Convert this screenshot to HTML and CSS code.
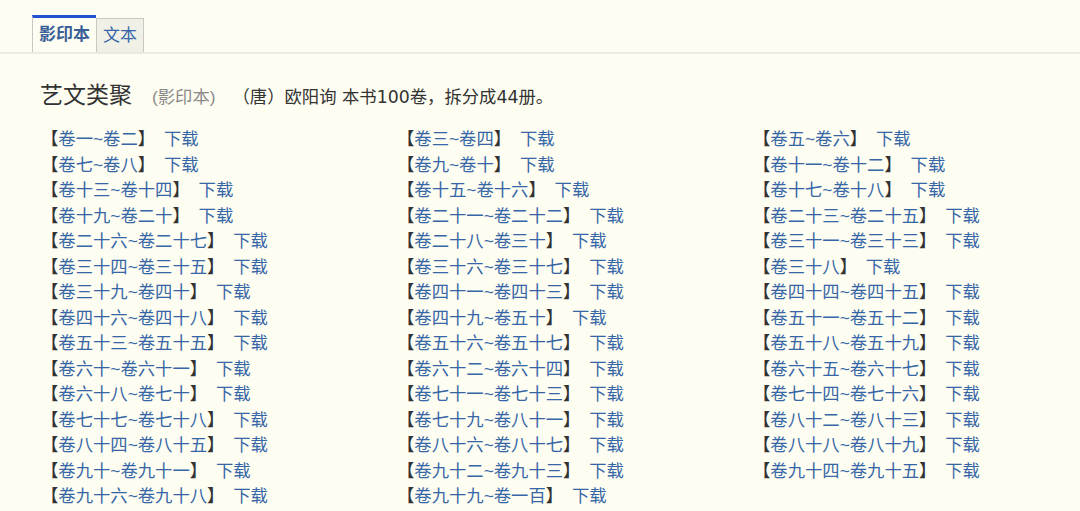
FILE: index.html
```html
<!DOCTYPE html>
<html lang="zh">
<head>
  <meta charset="UTF-8" />
  <title>艺文类聚</title>
  <link rel="stylesheet" href="styles.css">
</head>
<body>

  <!-- TABS -->
  <div class="tabs">
    <a class="tab active" href="#">影印本</a>
    <a class="tab" href="#">文本</a>
  </div>

  <div class="content">
    <h1 class="title">艺文类聚<span class="edition">(影印本)</span><span class="meta">（唐）欧阳询 本书100卷，拆分成44册。</span></h1>

    <ul class="volumes">
      <li>【<a href="#">卷一~卷二</a>】 <a href="#">下载</a></li>
      <li>【<a href="#">卷三~卷四</a>】 <a href="#">下载</a></li>
      <li>【<a href="#">卷五~卷六</a>】 <a href="#">下载</a></li>
      <li>【<a href="#">卷七~卷八</a>】 <a href="#">下载</a></li>
      <li>【<a href="#">卷九~卷十</a>】 <a href="#">下载</a></li>
      <li>【<a href="#">卷十一~卷十二</a>】 <a href="#">下载</a></li>
      <li>【<a href="#">卷十三~卷十四</a>】 <a href="#">下载</a></li>
      <li>【<a href="#">卷十五~卷十六</a>】 <a href="#">下载</a></li>
      <li>【<a href="#">卷十七~卷十八</a>】 <a href="#">下载</a></li>
      <li>【<a href="#">卷十九~卷二十</a>】 <a href="#">下载</a></li>
      <li>【<a href="#">卷二十一~卷二十二</a>】 <a href="#">下载</a></li>
      <li>【<a href="#">卷二十三~卷二十五</a>】 <a href="#">下载</a></li>
      <li>【<a href="#">卷二十六~卷二十七</a>】 <a href="#">下载</a></li>
      <li>【<a href="#">卷二十八~卷三十</a>】 <a href="#">下载</a></li>
      <li>【<a href="#">卷三十一~卷三十三</a>】 <a href="#">下载</a></li>
      <li>【<a href="#">卷三十四~卷三十五</a>】 <a href="#">下载</a></li>
      <li>【<a href="#">卷三十六~卷三十七</a>】 <a href="#">下载</a></li>
      <li>【<a href="#">卷三十八</a>】 <a href="#">下载</a></li>
      <li>【<a href="#">卷三十九~卷四十</a>】 <a href="#">下载</a></li>
      <li>【<a href="#">卷四十一~卷四十三</a>】 <a href="#">下载</a></li>
      <li>【<a href="#">卷四十四~卷四十五</a>】 <a href="#">下载</a></li>
      <li>【<a href="#">卷四十六~卷四十八</a>】 <a href="#">下载</a></li>
      <li>【<a href="#">卷四十九~卷五十</a>】 <a href="#">下载</a></li>
      <li>【<a href="#">卷五十一~卷五十二</a>】 <a href="#">下载</a></li>
      <li>【<a href="#">卷五十三~卷五十五</a>】 <a href="#">下载</a></li>
      <li>【<a href="#">卷五十六~卷五十七</a>】 <a href="#">下载</a></li>
      <li>【<a href="#">卷五十八~卷五十九</a>】 <a href="#">下载</a></li>
      <li>【<a href="#">卷六十~卷六十一</a>】 <a href="#">下载</a></li>
      <li>【<a href="#">卷六十二~卷六十四</a>】 <a href="#">下载</a></li>
      <li>【<a href="#">卷六十五~卷六十七</a>】 <a href="#">下载</a></li>
      <li>【<a href="#">卷六十八~卷七十</a>】 <a href="#">下载</a></li>
      <li>【<a href="#">卷七十一~卷七十三</a>】 <a href="#">下载</a></li>
      <li>【<a href="#">卷七十四~卷七十六</a>】 <a href="#">下载</a></li>
      <li>【<a href="#">卷七十七~卷七十八</a>】 <a href="#">下载</a></li>
      <li>【<a href="#">卷七十九~卷八十一</a>】 <a href="#">下载</a></li>
      <li>【<a href="#">卷八十二~卷八十三</a>】 <a href="#">下载</a></li>
      <li>【<a href="#">卷八十四~卷八十五</a>】 <a href="#">下载</a></li>
      <li>【<a href="#">卷八十六~卷八十七</a>】 <a href="#">下载</a></li>
      <li>【<a href="#">卷八十八~卷八十九</a>】 <a href="#">下载</a></li>
      <li>【<a href="#">卷九十~卷九十一</a>】 <a href="#">下载</a></li>
      <li>【<a href="#">卷九十二~卷九十三</a>】 <a href="#">下载</a></li>
      <li>【<a href="#">卷九十四~卷九十五</a>】 <a href="#">下载</a></li>
      <li>【<a href="#">卷九十六~卷九十八</a>】 <a href="#">下载</a></li>
      <li>【<a href="#">卷九十九~卷一百</a>】 <a href="#">下载</a></li>
    </ul>
  </div>

</body>
</html>
```

FILE: styles.css
```css
body {
  margin: 0;
  background-color: #fdfdf1;
  color: #333;
  font-family: "Liberation Sans", "Noto Sans CJK SC", sans-serif;
  font-size: 13pt;
}
a {
  color: #3766a7;
  text-decoration: none;
}
.tabs {
  display: flex;
  align-items: flex-end;
  padding: 15px 0 0 32px;
  border-bottom: 2px solid #ecebe2;
}
.tab {
  display: block;
  height: 33px;
  line-height: 33px;
  padding: 0 6px;
  border: 1px solid #c9c8c0;
  border-bottom: none;
  background-color: #f1f0e7;
  font-size: 17px;
}
.tab.active {
  height: 34px;
  line-height: 34px;
  background-color: #fdfdf1;
  border-top: 3px solid #2153d1;
  border-right: none;
  font-weight: bold;
  color: #3b5f97;
}
.content {
  padding: 0 0 0 40px;
}
.title {
  margin: 23px 0 12px;
  font-size: 23px;
  font-weight: normal;
  color: #333;
  line-height: 36px;
}
.edition {
  margin-left: 20px;
  font-size: 13pt;
  color: #8a8a8a;
}
.meta {
  margin-left: 17px;
  font-family: "DejaVu Sans", "Noto Sans CJK SC", sans-serif;
  font-size: 13pt;
  color: #333;
}
.volumes {
  list-style: none;
  margin: 0;
  padding: 0 0 0 1px;
  display: grid;
  grid-template-columns: repeat(3, 356px);
}
.volumes li {
  line-height: 25.5px;
  white-space: nowrap;
  word-spacing: 4px;
}
```
